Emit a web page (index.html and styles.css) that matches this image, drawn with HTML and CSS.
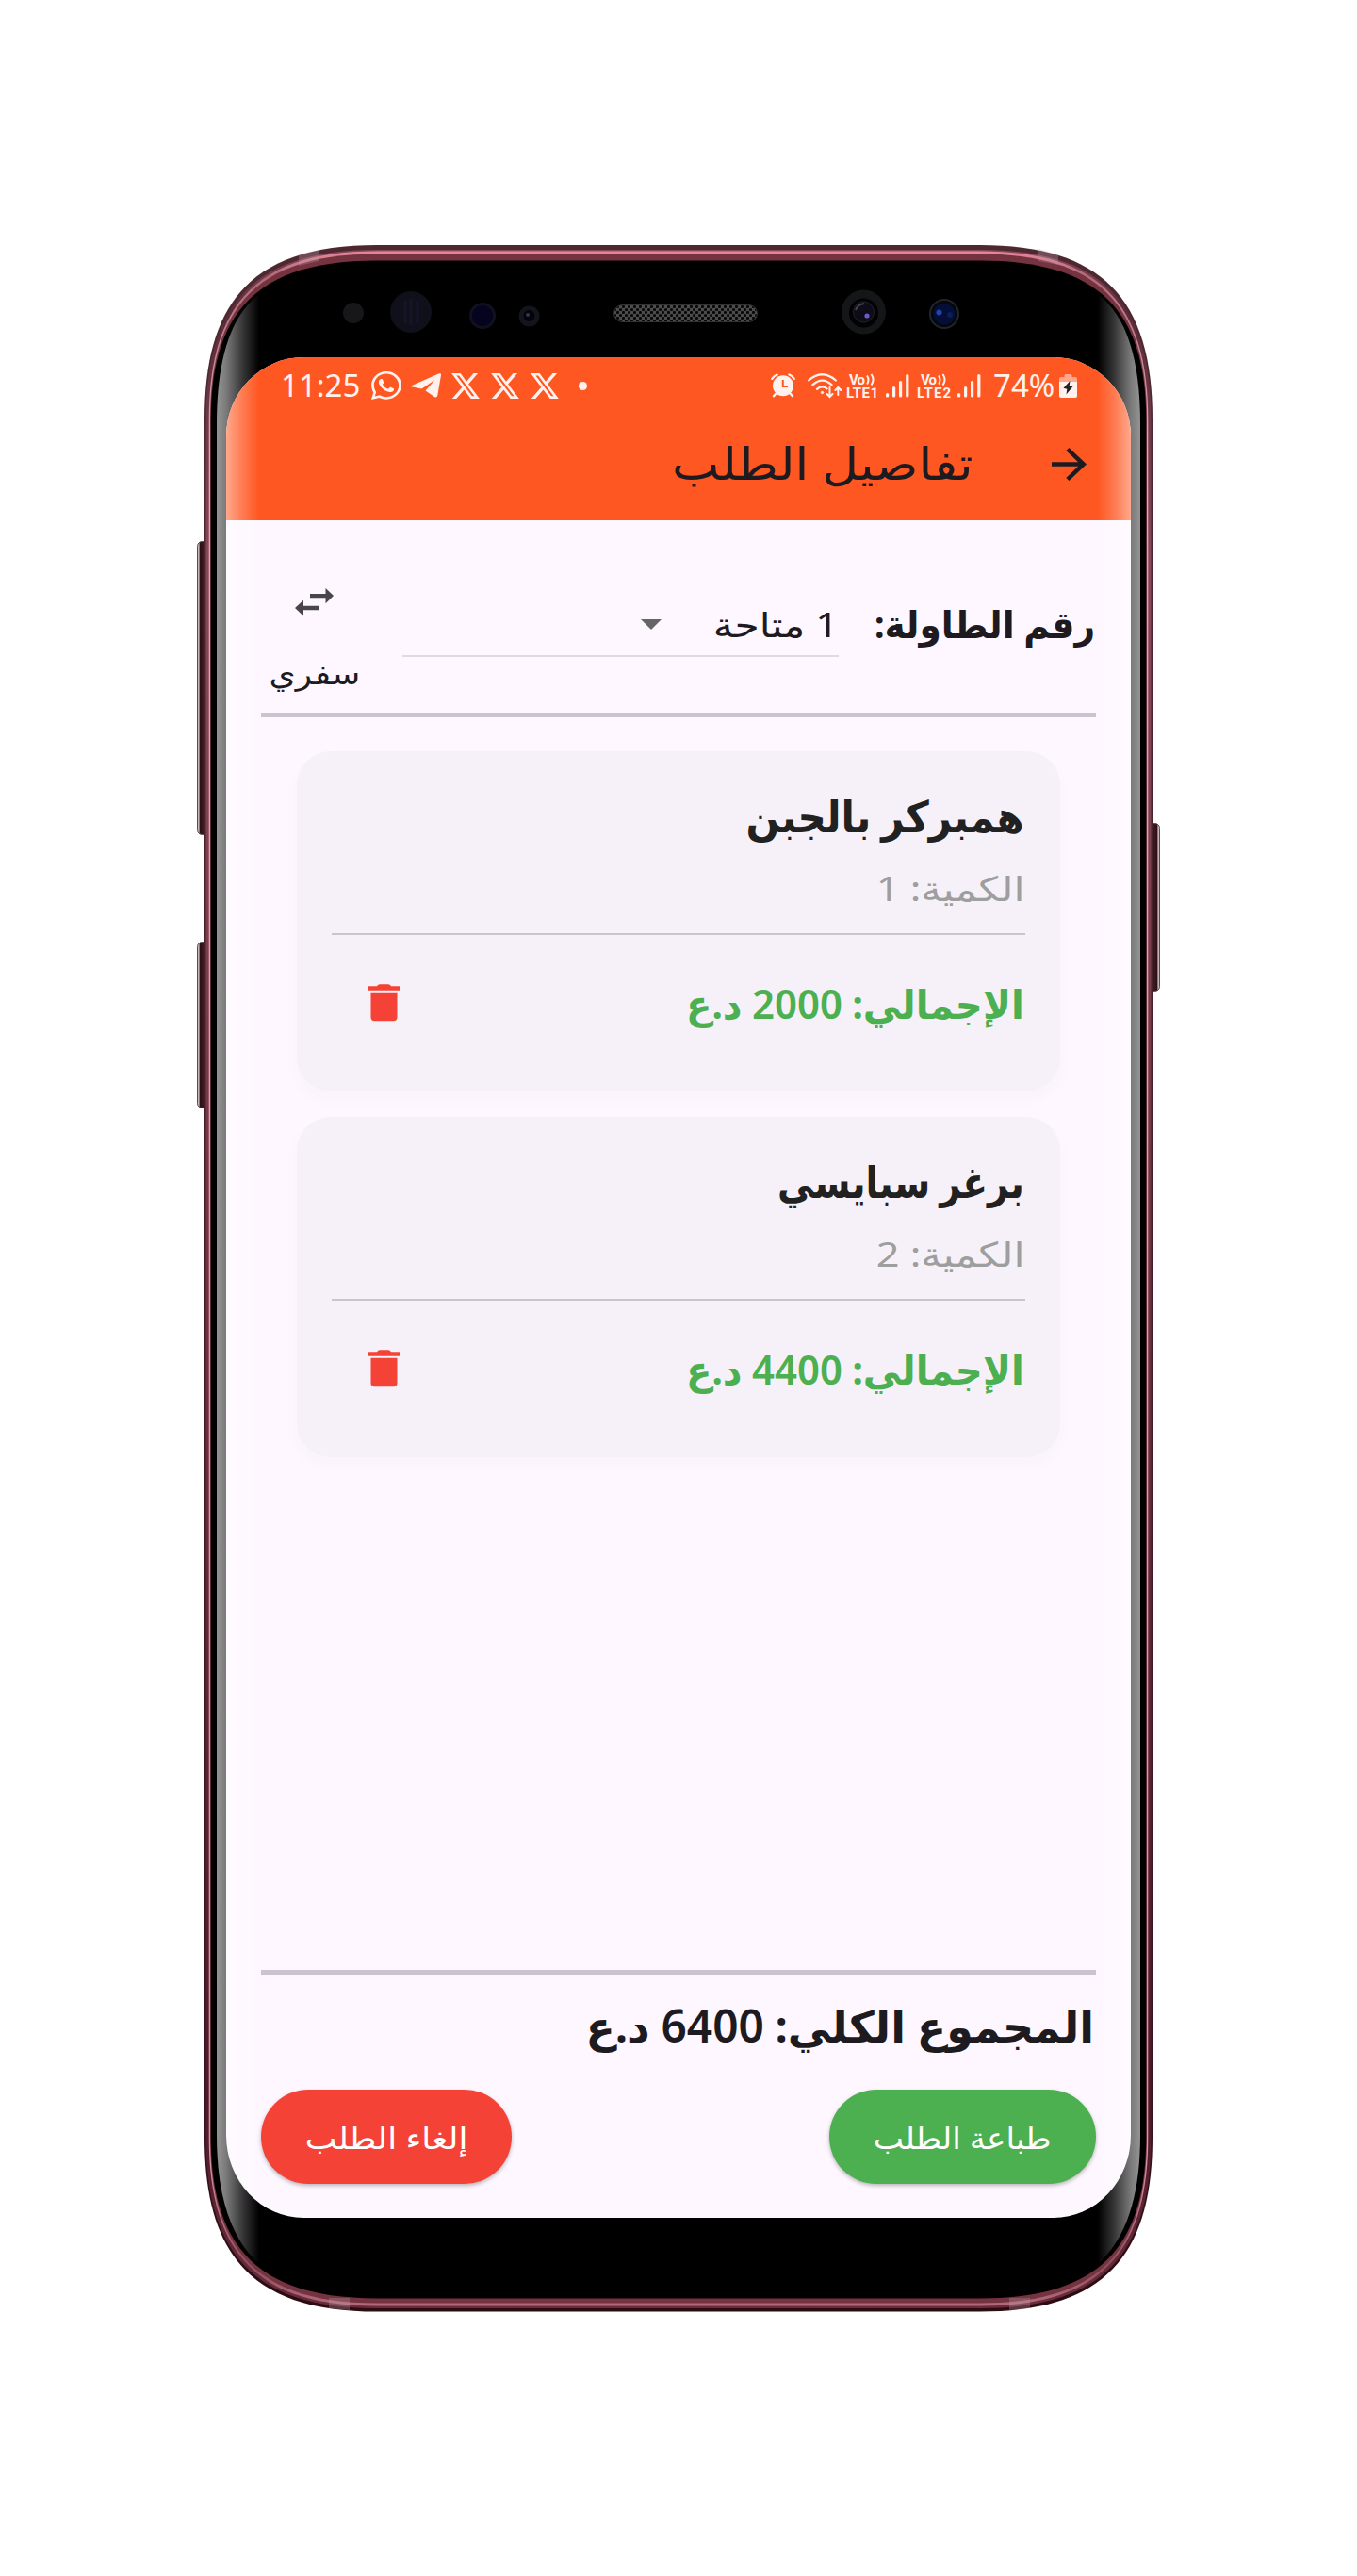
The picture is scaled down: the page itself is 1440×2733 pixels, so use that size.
FILE: index.html
```html
<!DOCTYPE html>
<html lang="ar" dir="rtl">
<head>
<meta charset="utf-8">
<title>تفاصيل الطلب</title>
<link rel="stylesheet" href="styles.css">
</head>
<body>
<div class="phone">
  <svg class="frame" viewBox="209 260 1022 2193" width="1022" height="2193" aria-hidden="true">
    <defs>
      <linearGradient id="key" x1="0" x2="1" y1="0" y2="0"><stop offset="0" stop-color="#c9b5b8"/><stop offset=".12" stop-color="#c9b5b8"/><stop offset=".18" stop-color="#2a1016"/><stop offset=".6" stop-color="#4a1e29"/><stop offset="1" stop-color="#4a1e29"/></linearGradient>
      <linearGradient id="rim" x1="0" x2="0" y1="0" y2="1"><stop offset="0" stop-color="#e8869c"/><stop offset=".012" stop-color="#b06a7a"/><stop offset=".05" stop-color="#c58795"/><stop offset=".1" stop-color="#e6a5b2"/><stop offset=".93" stop-color="#d795a3"/><stop offset=".98" stop-color="#8a4d5c"/><stop offset="1" stop-color="#b26a7c"/></linearGradient>
      <linearGradient id="edge" x1="0" x2="0" y1="0" y2="1"><stop offset="0" stop-color="#4d2831"/><stop offset=".1" stop-color="#4d2831"/><stop offset=".9" stop-color="#3a141d"/><stop offset="1" stop-color="#2a0c12"/></linearGradient>
      <linearGradient id="side" x1="0" x2="0" y1="0" y2="1"><stop offset="0" stop-color="#86495a"/><stop offset=".03" stop-color="#5a2c38"/><stop offset=".15" stop-color="#86495a"/><stop offset=".5" stop-color="#6f3442"/><stop offset=".9" stop-color="#4e1a2b"/><stop offset="1" stop-color="#6a2c3a"/></linearGradient>
      <pattern id="mesh" width="6" height="6" patternUnits="userSpaceOnUse"><rect width="6" height="6" fill="#4c4c4c"/><circle cx="1.5" cy="1.5" r="1.6" fill="#080808"/><circle cx="4.5" cy="4.5" r="1.6" fill="#080808"/></pattern>
    </defs>
    <g fill="url(#key)" stroke="#5c4a4e" stroke-width="1">
      <rect x="209.5" y="574.5" width="14" height="311" rx="5"/>
      <rect x="209.5" y="999.5" width="14" height="176" rx="5"/>
      <rect x="209.5" y="873.5" width="14" height="178" rx="5" transform="matrix(-1 0 0 1 1440 0)"/>
    </g>
    <path fill="url(#edge)" d="M217 445C217 315.500 272 260 400 260H1040C1168 260 1223 315.500 1223 445V2267.500C1223 2397 1168 2452.500 1040 2452.500H400C272 2452.500 217 2397 217 2267.500Z"/>
    <path fill="url(#side)" d="M218.500 445C218.500 319 273 265 400 265H1040C1167 265 1221.500 319 1221.500 445V2267.500C1221.500 2394.500 1167 2449 1040 2449H400C273 2449 218.500 2394.500 218.500 2267.500Z"/>
    <path fill="url(#rim)" d="M221.700 445C221.700 320 275.200 266.500 400 266.500H1040C1164.800 266.500 1218.300 320 1218.300 445V2267.500C1218.300 2392.800 1164.800 2446.500 1040 2446.500H400C275.200 2446.500 221.700 2392.800 221.700 2267.500Z"/>
    <path fill="#74333f" d="M223 445C223 322 276 269.500 400 269.500H1040C1164 269.500 1217 322 1217 445V2267.500C1217 2390.700 1164 2443.500 1040 2443.500H400C276 2443.500 223 2390.700 223 2267.500Z"/>
    <path fill="#000" d="M223.800 445C223.800 327 276.700 276.500 400 276.500H1040C1163.300 276.500 1216.200 327 1216.200 445V2267.500C1216.200 2387.200 1163.300 2438.500 1040 2438.500H400C276.700 2438.500 223.800 2387.200 223.800 2267.500Z"/>
    <g fill="#c49aa5" opacity=".3">
      <path d="M317 270L338 265V277L317 282ZM1123 270L1102 264V277L1123 281Z"/>
      <path d="M349 2438H371V2451L349 2449ZM1071 2438H1093V2449L1071 2451Z"/>
    </g>
    <circle cx="375" cy="332" r="11" fill="#17171a"/>
    <circle cx="436" cy="331" r="22" fill="#10101a"/>
    <path d="M430 319v24M436 317v28M443 319v24" stroke="#15152a" stroke-width="3"/>
    <circle cx="512" cy="335" r="12.500" fill="#04041f" stroke="#10101f" stroke-width="3"/>
    <circle cx="561.500" cy="335.500" r="11" fill="#14141d"/><circle cx="561.500" cy="335" r="6" fill="#03030c"/><circle cx="560" cy="334" r="2" fill="#34344a"/>
    <rect x="651.500" y="323.500" width="152" height="18" rx="9" fill="url(#mesh)" stroke="#333"/>
    <circle cx="916.500" cy="331" r="23.500" fill="#151617"/><circle cx="916.500" cy="332" r="15.500" fill="#020204"/><circle cx="916.500" cy="331" r="11" fill="#0d0c18" stroke="#22222c"/><path d="M908 329q2-6 9-7" stroke="#44444f" stroke-width="2" fill="none"/><circle cx="920" cy="335" r="2.600" fill="#6a5cc0"/>
    <circle cx="1002" cy="333" r="15" fill="#05070f" stroke="#22262a" stroke-width="2"/><circle cx="1002" cy="333" r="11.500" fill="#050e36"/><circle cx="996.500" cy="331.500" r="3" fill="#1d47a8"/><circle cx="1008" cy="334" r="3" fill="#0c1e58"/>
  </svg>

  <main class="screen">
    <header class="topbar">
      <div class="status" dir="ltr">
        <span class="clock">11:25</span>
        <svg class="s-wa" viewBox="0 0 16 16" width="32" height="30" preserveAspectRatio="none" fill="currentColor"><path d="M13.601 2.326A7.85 7.85 0 0 0 7.994 0C3.627 0 .068 3.558.064 7.926c0 1.399.366 2.760 1.057 3.965L0 16l4.204-1.102a7.900 7.900 0 0 0 3.790.965h.004c4.368 0 7.926-3.558 7.930-7.930A7.900 7.900 0 0 0 13.600 2.326zM7.994 14.521a6.600 6.600 0 0 1-3.356-.920l-.240-.144-2.494.654.666-2.433-.156-.251a6.560 6.560 0 0 1-1.007-3.505c0-3.626 2.957-6.584 6.591-6.584a6.560 6.560 0 0 1 4.660 1.931 6.560 6.560 0 0 1 1.928 4.660c-.004 3.639-2.961 6.592-6.592 6.592m3.615-4.934c-.197-.099-1.170-.578-1.353-.646-.182-.065-.315-.099-.445.099-.133.197-.513.646-.627.775-.114.133-.232.148-.430.050-.197-.100-.836-.308-1.592-.985-.590-.525-.985-1.175-1.103-1.372-.114-.198-.011-.304.088-.403.087-.088.197-.232.296-.346.100-.114.133-.198.198-.330.065-.134.034-.248-.015-.347-.050-.099-.445-1.076-.612-1.470-.160-.389-.323-.335-.445-.340-.114-.007-.247-.007-.380-.007a.730.730 0 0 0-.529.247c-.182.198-.691.677-.691 1.654s.710 1.916.810 2.049c.098.133 1.394 2.132 3.383 2.992.470.205.840.326 1.129.418.475.152.904.129 1.246.080.380-.058 1.171-.480 1.338-.943.164-.464.164-.860.114-.943-.049-.084-.182-.133-.380-.232"/></svg>
        <svg class="s-tg" viewBox="0 0 32 26" width="32" height="26" fill="currentColor"><path d="M1 13L30 .3Q32.300-.4 32 2L28.300 23.500Q27.600 26.500 25 25L15.500 18.500L25.500 7L11.500 16.500L1.500 14.500Q-.6 13.800 1 13Z"/></svg>
        <svg class="s-x" viewBox="0 .75 16 14.500" width="30" height="27" fill="currentColor"><path d="M12.600.75h2.454l-5.360 6.142L16 15.250h-4.937l-3.867-5.070-4.425 5.070H.316l5.733-6.570L0 .750h5.063l3.495 4.633L12.601.750Zm-.860 13.028h1.360L4.323 2.145H2.865z"/></svg>
        <svg class="s-x" viewBox="0 .75 16 14.500" width="30" height="27" fill="currentColor"><path d="M12.600.75h2.454l-5.360 6.142L16 15.250h-4.937l-3.867-5.070-4.425 5.070H.316l5.733-6.570L0 .750h5.063l3.495 4.633L12.601.750Zm-.860 13.028h1.360L4.323 2.145H2.865z"/></svg>
        <svg class="s-x" viewBox="0 .75 16 14.500" width="30" height="27" fill="currentColor"><path d="M12.600.75h2.454l-5.360 6.142L16 15.250h-4.937l-3.867-5.070-4.425 5.070H.316l5.733-6.570L0 .750h5.063l3.495 4.633L12.601.750Zm-.860 13.028h1.360L4.323 2.145H2.865z"/></svg>
        <i class="more"></i>
        <svg class="s-alarm" viewBox="0 0 26 26" width="26" height="26"><g fill="none" stroke="#fff2ee" stroke-width="2.400" stroke-linecap="round"><path d="M1.300 5.800Q3 2.800 6.500 1.500M24.700 5.800Q23 2.800 19.500 1.500M5.500 21.500L3 24.300M20.500 21.500L23 24.300"/></g><circle cx="13" cy="13.300" r="11" fill="#fff2ee"/><path d="M12.800 7v7H18" fill="none" stroke="#ff5722" stroke-width="2"/></svg>
        <svg class="s-wifi" viewBox="0 0 36 27" width="36" height="27" fill="none" stroke="#fff2ee" stroke-width="2.300" stroke-linecap="round"><path d="M1.200 7.500Q15.500-5 29.800 7.500M5.500 12.200Q15.500 3 25.500 12.200M10 16.800Q15.500 12 20.500 16.300"/><circle cx="15.500" cy="20.500" r="1.200" fill="#fff2ee" stroke-width="1"/><path d="M23.500 15v9.500M20.500 22l3 3 3-3M32.300 23v-7.500M29.300 18l3-3 3 3" stroke-width="2"/></svg>
        <svg class="s-volte" viewBox="0 0 35 26" width="35" height="26" fill="currentColor"><text x="3" y="11.500" textLength="17">Vo</text><path d="M22 2.500q3 4.500 0 9M26.500 1q4 5.500 0 11.500" fill="none" stroke="#fff2ee" stroke-width="2"/><text x="0" y="25.500" textLength="34">LTE1</text></svg>
        <svg class="s-bars" viewBox="0 0 25 25" width="25" height="25" fill="currentColor"><rect y="20" width="3.200" height="4.500" rx="1.500"/><rect x="7" y="13" width="3.200" height="11.500" rx="1.500"/><rect x="14" y="7" width="3.200" height="17.500" rx="1.500"/><rect x="21.200" y="0" width="3.200" height="24.500" rx="1.500"/></svg>
        <svg class="s-volte" viewBox="0 0 36 26" width="36" height="26" fill="currentColor"><text x="4" y="11.500" textLength="17">Vo</text><path d="M23 2.500q3 4.500 0 9M27.500 1q4 5.500 0 11.500" fill="none" stroke="#fff2ee" stroke-width="2"/><text x="0" y="25.500" textLength="36">LTE2</text></svg>
        <svg class="s-bars" viewBox="0 0 25 25" width="25" height="25" fill="currentColor"><rect y="20" width="3.200" height="4.500" rx="1.500"/><rect x="7" y="13" width="3.200" height="11.500" rx="1.500"/><rect x="14" y="7" width="3.200" height="17.500" rx="1.500"/><rect x="21.200" y="0" width="3.200" height="24.500" rx="1.500"/></svg>
        <span class="percent">74%</span>
        <svg class="s-batt" viewBox="0 0 19 25" width="19" height="25"><path d="M5.500 1.500Q5.500 0 7 0h5q1.500 0 1.500 1.500V3H17q2 0 2 2v4H0V5q0-2 2-2h3.500z" fill="#ffa68c"/><path d="M0 8h19v15q0 2-2 2H2q-2 0-2-2z" fill="#fff2ee"/><path d="M11.500 7L4.500 14.800l3.800 1L7.500 21.500L14.500 13l-3.800-.8z" fill="#222"/></svg>
      </div>
      <div class="appbar">
        <svg class="back" viewBox="4 4 16 16" width="37" height="35" preserveAspectRatio="none" fill="#1d1b20"><path d="M12 4l-1.410 1.410L16.170 11H4v2h12.170l-5.580 5.590L12 20l8-8z"/></svg>
        <h1 class="title"><span class="fit">تفاصيل الطلب</span></h1>
      </div>
    </header>

    <section class="table-row">
      <span class="table-label"><span class="fit">رقم الطاولة:</span></span>
      <div class="select">
        <span class="select-value"><span class="fit">1 متاحة</span></span>
        <svg viewBox="0 0 22 11" width="22" height="11"><path d="M0 0h22L11 11z" fill="#666"/></svg>
      </div>
      <div class="takeaway">
        <svg viewBox="0 0 41 30" width="41" height="30" fill="#49454f"><path d="M16 6h16.500V0L41 8l-8.500 8.200V10.300H16zM25 18.800H9V12.800L0 21l9 8.400V23.200H25z"/></svg>
        <span class="takeaway-text"><span class="fit">سفري</span></span>
      </div>
    </section>

    <section class="items">
      <article class="card">
        <h2 class="name"><span class="fit">همبركر بالجبن</span></h2>
        <p class="qty"><span class="fit">الكمية: 1</span></p>
        <div class="card-foot">
          <span class="sum"><span class="fit">الإجمالي: <b class="num">2000</b> د.ع</span></span>
          <svg viewBox="0 0 33 39.500" width="33" height="40" fill="#f44336"><path d="M9 2Q10 0 12 0h9q2 0 3 2h9v4.500H0V2zM2.500 8.500h28V35q0 4-4 4h-20q-4 0-4-4z"/></svg>
        </div>
      </article>
      <article class="card">
        <h2 class="name name-narrow"><span class="fit">برغر سبايسي</span></h2>
        <p class="qty"><span class="fit">الكمية: 2</span></p>
        <div class="card-foot">
          <span class="sum"><span class="fit">الإجمالي: <b class="num">4400</b> د.ع</span></span>
          <svg viewBox="0 0 33 39.500" width="33" height="40" fill="#f44336"><path d="M9 2Q10 0 12 0h9q2 0 3 2h9v4.500H0V2zM2.500 8.500h28V35q0 4-4 4h-20q-4 0-4-4z"/></svg>
        </div>
      </article>
    </section>

    <footer class="bottom">
      <div class="grand"><span class="fit">المجموع الكلي: <b class="num">6400</b> د.ع</span></div>
      <div class="actions">
        <button class="btn print"><span class="fit">طباعة الطلب</span></button>
        <button class="btn cancel"><span class="fit">إلغاء الطلب</span></button>
      </div>
    </footer>
  </main>

  <svg class="gloss" viewBox="209 260 1022 2193" width="1022" height="2193" aria-hidden="true">
    <defs><linearGradient id="shine" gradientUnits="userSpaceOnUse" x1="230" x2="275" y1="0" y2="0"><stop offset="0" stop-color="#fff" stop-opacity=".58"/><stop offset=".22" stop-color="#fff" stop-opacity=".48"/><stop offset=".6" stop-color="#fff" stop-opacity=".22"/><stop offset="1" stop-color="#fff" stop-opacity="0"/></linearGradient></defs>
    <path id="strip" fill="url(#shine)" d="M275 312C245 335 230 380 230 450V2265C230 2330 245 2375 275 2402Z"/>
    <use href="#strip" transform="matrix(-1 0 0 1 1440 0)"/>
  </svg>
</div>
</body>
</html>
```
FILE: styles.css
```css
* { box-sizing: border-box; margin: 0; padding: 0; }
body { width: 1440px; height: 2733px; padding: 260px 217px; background: #fff; font-family: "Noto Sans", "DejaVu Sans", sans-serif; color: #1d1b20; }
svg { display: block; flex: none; }
.phone { position: relative; width: 1006px; height: 2193px; padding: 119px 23px 100px; }
.frame, .gloss { position: absolute; top: 0; left: -8px; }
.gloss { pointer-events: none; z-index: 2; }
.screen { position: relative; z-index: 1; display: flex; flex-direction: column; width: 960px; height: 1974px; background: #fef7ff; border-radius: 82px 82px 82px 82px / 84px 84px 88px 88px; overflow: hidden; }

/* Arabic runs are stretched or condensed horizontally to the app's letter widths */
.fit { display: inline-block; white-space: nowrap; transform-origin: 100% 50%; transform: scaleX(var(--fit, 1)); }
.num { font-size: 1.04em; font-weight: 600; letter-spacing: 3px; }

.topbar { height: 173px; background: #ff5722; }
.status { display: flex; align-items: center; height: 60px; padding: 0 57px 0 58px; color: #fff2ee; }
.clock, .percent { font-size: 33px; line-height: 60px; white-space: nowrap; }
.clock { width: 85px; }
.s-wa { margin-left: 11px; }
.s-tg { margin-left: 10px; }
.s-x { margin-left: 12px; }
.s-tg + .s-x { margin-left: 11px; }
.more { width: 9px; height: 9px; margin-left: 21px; border-radius: 50%; background: currentColor; }
.s-alarm { margin-left: auto; }
.s-wifi { margin-left: 13px; }
.s-volte { margin-left: 5px; overflow: visible; font: 700 15px Roboto, sans-serif; }
.s-bars { margin-left: 7px; }
.s-bars + .s-volte { margin-left: 8px; }
.percent { margin-left: 13px; width: 67px; }
.s-batt { margin-left: 3px; }
.appbar { display: flex; align-items: center; height: 107px; padding: 0 47px 0 0; }
.title { --fit: 1.115; margin: -3px 83px 0 0; font-size: 48px; font-weight: 400; line-height: 60px; }

.table-row { display: flex; height: 209px; margin: 0 37px; border-bottom: 5px solid #cac4d0; }
.table-label { --fit: .94; width: 273px; padding: 80px 1px 0 0; font-size: 40px; font-weight: 700; line-height: 60px; }
.select { display: flex; align-items: flex-start; justify-content: space-between; width: 463px; height: 145px; border-bottom: 2px solid #e0dae2; padding: 81px 0 0 253px; }
.select-value { --fit: 1.18; width: 134px; font-size: 36px; line-height: 60px; }
.select svg { margin: 24px 0 0; }
.takeaway { display: flex; flex-direction: column; align-items: center; width: 113px; margin-right: auto; padding-top: 72px; }
.takeaway-text { --fit: 1.13; margin-top: 30px; font-size: 32px; line-height: 60px; }
.takeaway .fit, .btn .fit { transform-origin: 50% 50%; }

.items { flex: 1; padding: 36px 38px 0; margin: 0 37px; }
.card { height: 361px; margin-bottom: 27px; padding: 38px 37px 0; border-radius: 36px; background: #f6f1f8; box-shadow: 0 8px 18px rgba(90, 60, 110, .025); }
.name { --fit: .915; padding-right: 1px; font-size: 46px; font-weight: 700; line-height: 60px; color: #212121; }
.name-narrow { --fit: .845; }
.qty { --fit: 1.2; height: 97px; padding: 18px 1px 0 0; font-size: 36px; line-height: 60px; color: #9e9e9e; border-bottom: 2px solid #cac4d0; }
.card-foot { display: flex; align-items: center; justify-content: space-between; height: 144px; padding: 0 1px 0 39px; }
.sum { --fit: .96; font-size: 42px; font-weight: 700; line-height: 60px; color: #4caf50; }

.bottom { height: 263px; margin: 0 37px; border-top: 5px solid #cac4d0; padding-top: 24px; }
.grand { padding-right: 2px; font-size: 46px; font-weight: 700; line-height: 60px; }
.actions { display: flex; justify-content: space-between; margin-top: 38px; }
.grand .num { letter-spacing: 2px; }
.btn { height: 100px; padding-top: 1px; border: 0; border-radius: 50px; color: #fff; font: 400 32px/60px "Noto Sans", "DejaVu Sans", sans-serif; box-shadow: 0 2px 4px rgba(0, 0, 0, .28); }
.print { --fit: 1.07; width: 283px; background: #4caf50; }
.cancel { --fit: 1.12; width: 266px; background: #f44336; }
```
